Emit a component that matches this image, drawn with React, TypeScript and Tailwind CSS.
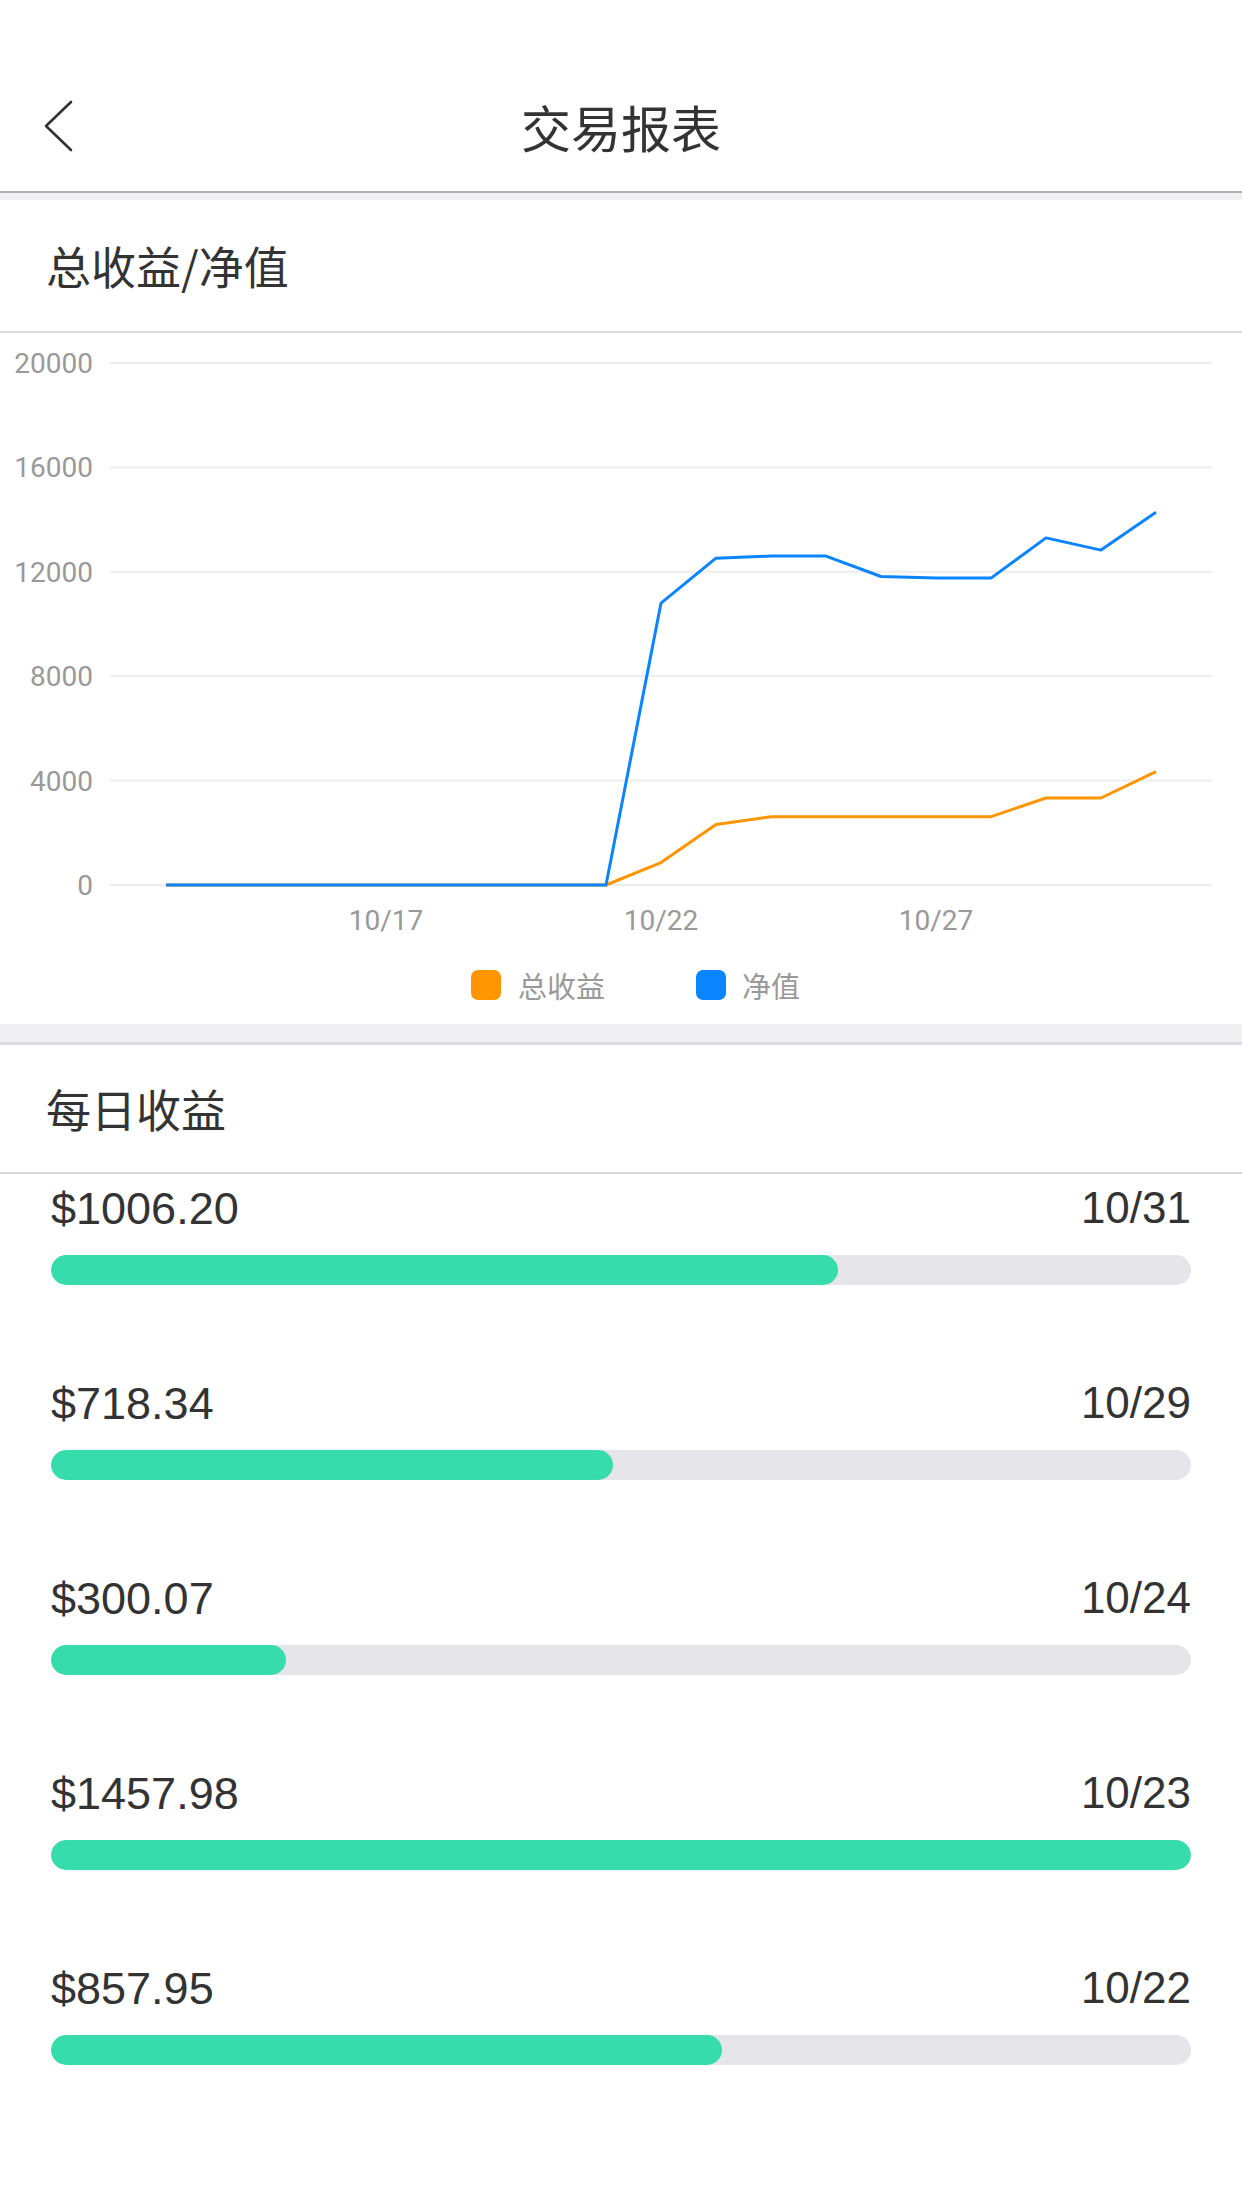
const cjk = "font-['Noto_Sans_CJK_SC',sans-serif]";

// chart data, one point per day from 10/13 to 10/31
const profit = [0, 0, 0, 0, 0, 0, 0, 0, 0, 857.95, 2315.93, 2616, 2616, 2616, 2616, 2616, 3334.34, 3334.34, 4340.54];
const equity = [0, 0, 0, 0, 0, 0, 0, 0, 0, 10800, 12520, 12600, 12600, 11820, 11760, 11760, 13300, 12830, 14280];

const daily = [
  { amount: 1006.2, date: "10/31" },
  { amount: 718.34, date: "10/29" },
  { amount: 300.07, date: "10/24" },
  { amount: 1457.98, date: "10/23" },
  { amount: 857.95, date: "10/22" },
];

const X0 = 166;
const DX = 55;
const Y0 = 552;
const STEP = 104.4; // px per 4000

const toPoints = (vals: number[]) =>
  vals.map((v, i) => `${X0 + i * DX},${(Y0 - (v / 4000) * STEP).toFixed(1)}`).join(" ");

function BackIcon() {
  return (
    <svg width="30" height="52" viewBox="0 0 30 52" fill="none">
      <polyline points="27,2 2,26 27,50" stroke="#333" strokeWidth="2.6" strokeLinecap="round" strokeLinejoin="round" />
    </svg>
  );
}

function Chart() {
  const ticks = [0, 4000, 8000, 12000, 16000, 20000];
  return (
    <svg width="1242" height="620" viewBox="0 0 1242 620" className="block">
      {ticks.map((t, i) => {
        const y = Y0 - i * STEP;
        return (
          <g key={t}>
            <line x1="110" x2="1212" y1={y} y2={y} stroke="#ededed" strokeWidth="2" />
            <text x="93" y={y + 10} textAnchor="end" fontSize="28" fill="#999" fontFamily="Roboto, sans-serif">
              {t}
            </text>
          </g>
        );
      })}
      {[
        { label: "10/17", i: 4 },
        { label: "10/22", i: 9 },
        { label: "10/27", i: 14 },
      ].map((d) => (
        <text key={d.label} x={X0 + d.i * DX} y="597" textAnchor="middle" fontSize="28" fill="#999" fontFamily="Roboto, sans-serif">
          {d.label}
        </text>
      ))}
      <polyline points={toPoints(profit)} fill="none" stroke="#ff9500" strokeWidth="3" strokeLinejoin="round" />
      <polyline points={toPoints(equity)} fill="none" stroke="#0a84ff" strokeWidth="3" strokeLinejoin="round" />
    </svg>
  );
}

export default function App() {
  const max = Math.max(...daily.map((d) => d.amount));

  return (
    <div className="w-[1242px] min-h-[2208px] bg-white text-[#333]">
      {/* nav bar */}
      <div className="h-[193px] pt-[60px] border-b-2 border-[#b0b0b0]">
        <div className="h-[131px] grid grid-cols-[1fr_auto_1fr] items-center">
          <div className="pl-[44px] flex items-center">
            <BackIcon />
          </div>
          <h1 className={`${cjk} text-[50px] leading-none`}>交易报表</h1>
          <div />
        </div>
      </div>
      <div className="h-[7px] bg-[#f0f0f2]" />

      {/* total profit / equity */}
      <div className="h-[133px] px-[46px] flex items-center border-b-2 border-[#dcdce2]">
        <span className={`${cjk} text-[45px] leading-none`}>总收益/净值</span>
      </div>
      <div className="pb-[24px]">
        <Chart />
        <div className={`${cjk} mt-[17px] h-[30px] pl-[471px] flex items-center text-[29px] leading-none text-[#999]`}>
          <span className="w-[30px] h-[30px] rounded-[7px] bg-[#ff9500]" />
          <span className="ml-[17px]">总收益</span>
          <span className="ml-[91px] w-[30px] h-[30px] rounded-[7px] bg-[#0a84ff]" />
          <span className="ml-[16px]">净值</span>
        </div>
      </div>
      <div className="h-[21px] bg-[#f0f0f3] border-b-[3px] border-[#dcdce2]" />

      {/* daily profit */}
      <div className="h-[129px] px-[46px] flex items-center border-b-2 border-[#d8d8e2]">
        <span className={`${cjk} text-[45px] leading-none`}>每日收益</span>
      </div>
      <div className="pt-[9px] px-[51px] flex flex-col gap-[93px] font-['Liberation_Sans',Arial,sans-serif]">
        {daily.map((d) => (
          <div key={d.date}>
            <div className="h-[50px] flex items-center justify-between text-[44px] leading-none">
              <span className="text-[45px]">${d.amount.toFixed(2)}</span>
              <span>{d.date}</span>
            </div>
            <div className="mt-[22px] h-[30px] rounded-full bg-[#e5e5ea] overflow-hidden">
              <div className="h-full rounded-full bg-[#36dcab]" style={{ width: `${(d.amount / max) * 100}%` }} />
            </div>
          </div>
        ))}
      </div>
    </div>
  );
}
